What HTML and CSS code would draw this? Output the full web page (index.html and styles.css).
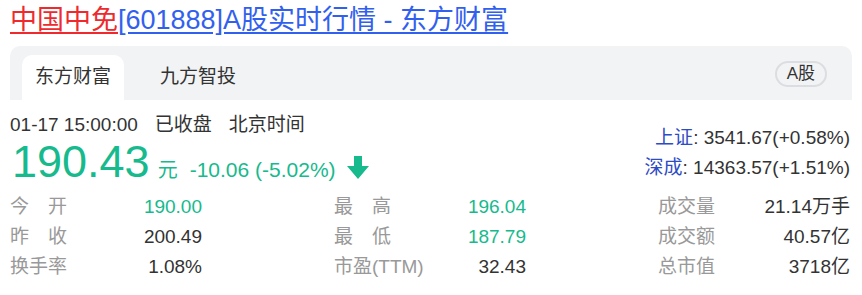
FILE: index.html
```html
<!DOCTYPE html>
<html lang="zh-CN">
<head>
    <meta charset="UTF-8">
    <meta name="viewport" content="width=device-width, initial-scale=1.0">
    <title>中国中免[601888]A股实时行情 - 东方财富</title>
    <link rel="stylesheet" href="styles.css">
</head>
<body>

    <div class="page">
        <h1 class="title"><a class="title-name" href="#">中国中免</a><a class="title-rest" href="#">[601888]A股实时行情 - 东方财富</a></h1>

        <div class="tabs">
            <div class="tab active">东方财富</div>
            <div class="tab">九方智投</div>
            <span class="market-tag">A股</span>
        </div>

        <div class="quote-head">
            <div class="quote-left">
                <div class="quote-time">01-17 15:00:00<span class="gap"></span>已收盘<span class="gap"></span>北京时间</div>
                <div class="quote-price">
                    <span class="price">190.43</span>
                    <span class="unit">元</span>
                    <span class="change">-10.06 (-5.02%)</span>
                    <svg class="arrow" width="22" height="23" viewBox="0 0 22 23"><path d="M7 0h8v10h7L11 23 0 10h7z" fill="#16ba8d"/></svg>
                </div>
            </div>
            <div class="quote-right">
                <div><a href="#" class="index-name">上证</a>: 3541.67(+0.58%)</div>
                <div><a href="#" class="index-name">深成</a>: 14363.57(+1.51%)</div>
            </div>
        </div>

        <div class="stats">
            <div class="stat"><span class="label">今&emsp;开</span><span class="value green">190.00</span></div>
            <div class="stat"><span class="label">最&emsp;高</span><span class="value green">196.04</span></div>
            <div class="stat"><span class="label">成交量</span><span class="value">21.14万手</span></div>
            <div class="stat"><span class="label">昨&emsp;收</span><span class="value">200.49</span></div>
            <div class="stat"><span class="label">最&emsp;低</span><span class="value green">187.79</span></div>
            <div class="stat"><span class="label">成交额</span><span class="value">40.57亿</span></div>
            <div class="stat"><span class="label">换手率</span><span class="value">1.08%</span></div>
            <div class="stat"><span class="label">市盈(TTM)</span><span class="value">32.43</span></div>
            <div class="stat"><span class="label">总市值</span><span class="value">3718亿</span></div>
        </div>
    </div>

</body>
</html>
```

FILE: styles.css
```css
body {
    margin: 0;
    background: #fff;
    font-family: "Liberation Sans", Arial, "Noto Sans CJK SC", sans-serif;
    color: #333;
}
.page {
    padding: 0 12px 0 10px;
}
.title {
    margin: 0 0 6px;
    font-size: 27px;
    font-weight: normal;
    line-height: 40px;
    white-space: nowrap;
}
.title a {
    text-decoration: underline;
    text-underline-offset: 3px;
}
.title-name {
    color: #ee2a2e;
}
.title-rest {
    color: #3260ee;
}
.tabs {
    display: flex;
    align-items: flex-end;
    height: 54px;
    margin-right: -2px;
    padding-left: 12px;
    padding-right: 25px;
    box-sizing: border-box;
    background: #f2f3f5;
    border-radius: 10px 10px 0 0;
}
.tab {
    height: 45px;
    line-height: 44px;
    padding: 0 13px;
    margin-right: 23px;
    font-size: 19px;
    color: #333;
}
.tab.active {
    background: #fff;
    border-radius: 10px 10px 0 0;
}
.market-tag {
    margin-left: auto;
    align-self: center;
    margin-top: 1px;
    height: 22px;
    line-height: 22px;
    padding: 0 10px;
    border: 2px solid #dcdde1;
    border-radius: 13px;
    font-size: 17px;
    color: #333;
}
.quote-head {
    display: flex;
    justify-content: space-between;
    align-items: flex-end;
    padding-top: 10px;
}
.quote-time {
    font-size: 19px;
    line-height: 30px;
    color: #333;
}
.gap {
    display: inline-block;
    width: 17px;
}
.quote-price {
    display: flex;
    align-items: baseline;
    height: 44px;
    color: #16ba8d;
}
.price {
    font-size: 45px;
    line-height: 44px;
    margin-left: 2px;
}
.unit {
    font-size: 20px;
    margin-left: 8px;
}
.change {
    font-size: 21px;
    margin-left: 12px;
}
.arrow {
    margin-left: 11px;
    align-self: center;
    margin-top: 10px;
}
.quote-right {
    text-align: right;
    font-size: 19px;
    line-height: 30px;
    color: #333;
    padding-bottom: 1px;
}
.index-name {
    color: #2e4bc6;
    text-decoration: none;
}
.stats {
    display: grid;
    grid-template-columns: 192px 192px 192px;
    justify-content: space-between;
    margin-top: 8px;
    font-size: 19px;
    line-height: 30px;
}
.stat {
    display: flex;
    justify-content: space-between;
}
.label {
    color: #999;
}
.value {
    color: #333;
}
.green {
    color: #16ba8d;
}
```
